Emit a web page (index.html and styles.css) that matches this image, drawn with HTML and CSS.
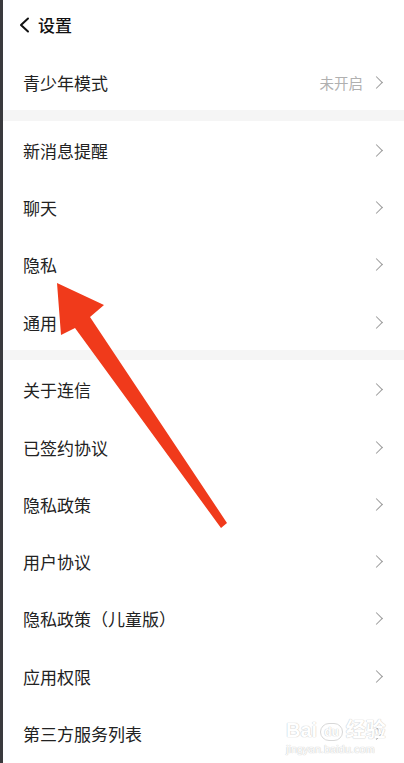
FILE: index.html
```html
<!DOCTYPE html>
<html lang="zh-CN">
<head>
    <meta charset="UTF-8">
    <meta name="viewport" content="width=device-width, initial-scale=1.0">
    <title>设置</title>
    <link rel="stylesheet" href="styles.css">
</head>
<body>
    <div class="page">
        <div class="header">
            <svg class="back" width="12" height="16" viewBox="0 0 12 16">
                <path d="M10 1.5 L3 8 L10 14.5" fill="none" stroke="#111" stroke-width="2" stroke-linecap="round" stroke-linejoin="round"/>
            </svg>
            <span class="title">设置</span>
        </div>

        <div class="group">
            <div class="row">
                <span class="label">青少年模式</span>
                <span class="value">未开启</span>
                <span class="chev"></span>
            </div>
        </div>

        <div class="band"></div>

        <div class="group">
            <div class="row"><span class="label">新消息提醒</span><span class="chev"></span></div>
            <div class="row"><span class="label">聊天</span><span class="chev"></span></div>
            <div class="row"><span class="label">隐私</span><span class="chev"></span></div>
            <div class="row"><span class="label">通用</span><span class="chev"></span></div>
        </div>

        <div class="band"></div>

        <div class="group">
            <div class="row"><span class="label">关于连信</span><span class="chev"></span></div>
            <div class="row"><span class="label">已签约协议</span><span class="chev"></span></div>
            <div class="row"><span class="label">隐私政策</span><span class="chev"></span></div>
            <div class="row"><span class="label">用户协议</span><span class="chev"></span></div>
            <div class="row"><span class="label">隐私政策（儿童版）</span><span class="chev"></span></div>
            <div class="row"><span class="label">应用权限</span><span class="chev"></span></div>
            <div class="row"><span class="label">第三方服务列表</span><span class="chev"></span></div>
        </div>
    </div>

    <!-- annotation arrow drawn over the screenshot -->
    <svg class="arrow" width="404" height="763" viewBox="0 0 404 763">
        <polygon points="57,283 104,305 90,317 227,523 221,528 75,328 61,335" fill="#f03a1b"/>
    </svg>

    <div class="watermark">
        <div class="wm-top">Bai<span class="wm-du">du</span>经验</div>
        <div class="wm-url">jingyan.baidu.com</div>
    </div>
</body>
</html>
```

FILE: styles.css
```css
body {
    margin: 0;
    background-color: #3a3a3d;
    font-family: "Noto Sans CJK SC", "Noto Sans", sans-serif;
    overflow: hidden;
}
.page {
    position: relative;
    margin-left: 3px;
    width: 401px;
    height: 763px;
    background: #fff;
    overflow: hidden;
}
.header {
    height: 53px;
    display: flex;
    align-items: center;
    padding-left: 15px;
    box-sizing: border-box;
    padding-bottom: 4px;
}
.back {
    display: block;
}
.title {
    margin-left: 8px;
    font-size: 17px;
    font-weight: 500;
    color: #111;
}
.band {
    height: 10.5px;
    background: #f5f5f5;
}
.row {
    height: 57.25px;
    display: flex;
    align-items: center;
    padding: 2px 19px 0 20px;
    box-sizing: border-box;
}
.label {
    flex: 1;
    font-size: 17px;
    color: #222;
}
.value {
    font-size: 14.5px;
    color: #b0b0b0;
    margin-right: 9px;
}
.chev {
    width: 8px;
    height: 8px;
    border-top: 1.5px solid #9a9a9a;
    border-right: 1.5px solid #9a9a9a;
    transform: rotate(45deg);
    margin-right: 4px;
}
.arrow {
    position: absolute;
    top: 0;
    left: 0;
    pointer-events: none;
}
.watermark {
    position: absolute;
    left: 286px;
    top: 718px;
    color: #fff;
    font-family: "Liberation Sans", "Noto Sans CJK SC", sans-serif;
    text-shadow: 0 0 1px #c8c8c8, 0 0 1px #c8c8c8;
    pointer-events: none;
}
.wm-top {
    font-size: 20px;
    font-weight: bold;
    line-height: 24px;
}
.wm-du {
    display: inline-block;
    font-size: 12px;
    border: 1px solid #d8d8d8;
    border-radius: 10px;
    padding: 0 3px;
    margin: 0 3px;
    line-height: 16px;
    vertical-align: middle;
}
.wm-url {
    font-size: 11px;
    line-height: 14px;
}
```
